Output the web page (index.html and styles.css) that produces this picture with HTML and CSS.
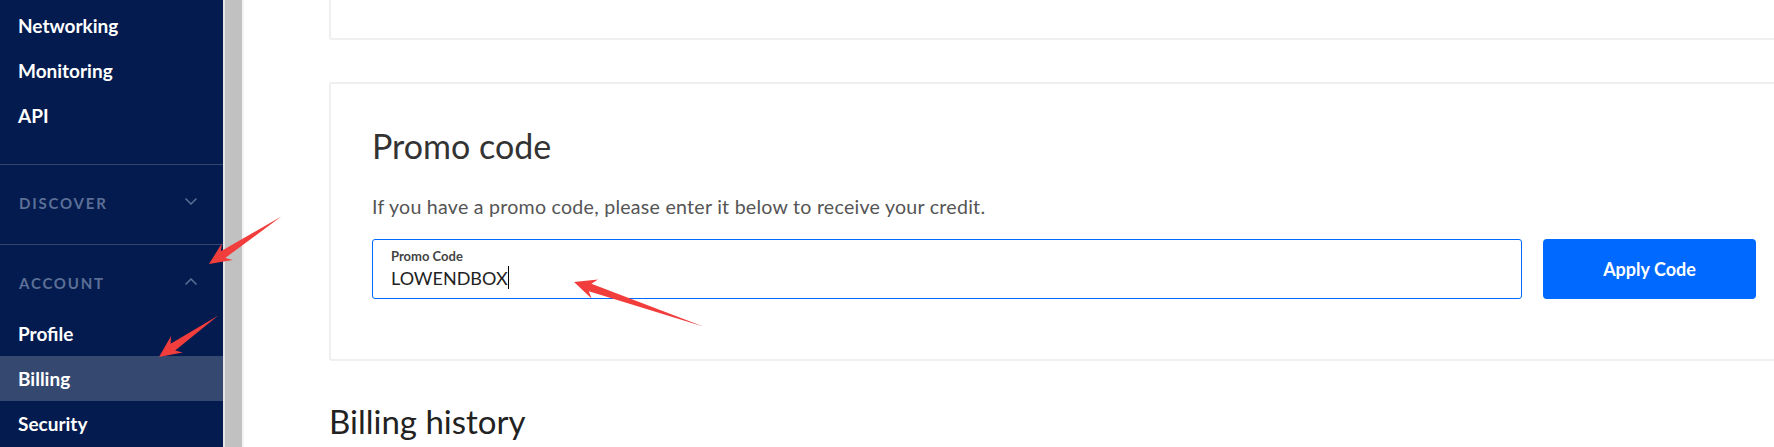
FILE: index.html
```html
<!DOCTYPE html>
<html lang="en">
<head>
    <meta charset="UTF-8">
    <meta name="viewport" content="width=device-width, initial-scale=1.0">
    <title>Billing</title>
    <link rel="stylesheet" href="styles.css">
</head>
<body>
    <!-- Sidebar -->
    <nav class="sidebar">
        <ul class="nav-list top-list">
            <li>Networking</li>
            <li>Monitoring</li>
            <li>API</li>
        </ul>

        <div class="nav-section">
            <div class="nav-head">
                <span>Discover</span>
                <svg class="chevron" width="12" height="7" viewBox="0 0 12 7"><path d="M0.5 0.5 L6 6 L11.5 0.5" /></svg>
            </div>
        </div>

        <div class="nav-section">
            <div class="nav-head">
                <span>Account</span>
                <svg class="chevron" width="12" height="7" viewBox="0 0 12 7"><path d="M0.5 6.5 L6 1 L11.5 6.5" /></svg>
            </div>
            <ul class="nav-list sub-list">
                <li>Profile</li>
                <li class="active">Billing</li>
                <li>Security</li>
            </ul>
        </div>
    </nav>

    <div class="scroll-track"></div>

    <!-- Main content -->
    <main class="content">
        <div class="card card-top"></div>

        <div class="card promo-card">
            <h2>Promo code</h2>
            <p class="promo-text">If you have a promo code, please enter it below to receive your credit.</p>
            <div class="promo-form">
                <div class="field">
                    <label>Promo Code</label>
                    <div class="field-value">LOWENDBOX<span class="caret"></span></div>
                </div>
                <button class="apply-btn">Apply Code</button>
            </div>
        </div>

        <h2 class="section-title">Billing history</h2>
    </main>

    <!-- Annotation arrows -->
    <svg class="annotations" width="1774" height="447" viewBox="0 0 1774 447">
        <polygon points="281.3,216.4 220.9,251.3 221.8,243.5 209,264 232.8,260.1 225.3,257.9" />
        <polygon points="218.3,315.4 170.6,343.8 171.1,336.1 159,357 182.7,352.4 175.2,350.4" />
        <polygon points="703.3,326.5 588.8,291.3 591.6,298.6 574,282 598,279.6 591.4,283.7" />
    </svg>
</body>
</html>
```

FILE: styles.css
```css
body {
    margin: 0;
    height: 447px;
    display: flex;
    overflow: hidden;
    background-color: #fff;
    font-family: Lato, "Liberation Sans", sans-serif;
    position: relative;
}
.sidebar {
    width: 223px;
    flex-shrink: 0;
    background-color: #031b4e;
    color: #fff;
    padding-top: 3px;
    box-sizing: border-box;
}
.nav-list {
    list-style: none;
    margin: 0;
    padding: 0;
}
.nav-list li {
    height: 45px;
    line-height: 45px;
    padding-left: 18px;
    font-size: 19px;
    font-weight: 700;
}
.nav-list li.active {
    background-color: #354870;
}
.top-list {
    padding-bottom: 26px;
}
.nav-section {
    border-top: 1px solid #34466f;
    padding: 26px 0 29px;
}
.nav-section:last-child {
    padding-bottom: 0;
}
.nav-head {
    display: flex;
    align-items: center;
    justify-content: space-between;
    height: 24px;
    padding: 0 26px 0 19px;
    font-size: 15px;
    font-weight: 700;
    letter-spacing: 1.8px;
    text-transform: uppercase;
    color: #5c6f96;
}
.chevron {
    fill: none;
    stroke: #5c6f96;
    stroke-width: 1.5;
    margin-top: -3px;
}
.sub-list {
    margin-top: 16px;
}
.scroll-track {
    width: 17px;
    flex-shrink: 0;
    background-color: #c1c1c1;
    border-left: 2px solid #e4e4e4;
    border-right: 2px solid #f3f3f3;
}
.content {
    flex: 1;
    padding-left: 85px;
    overflow: hidden;
}
.card {
    width: 1470px;
    box-sizing: border-box;
    border: 2px solid #efefef;
    border-radius: 3px;
    background-color: #fff;
}
.card-top {
    height: 40px;
    border-top: none;
    border-radius: 0 0 3px 3px;
}
.promo-card {
    margin-top: 42px;
    height: 279px;
    padding: 42px 41px 0;
}
.promo-card h2 {
    margin: 0;
    font-size: 34px;
    line-height: 40px;
    font-weight: 400;
    color: #333;
}
.promo-text {
    margin: 29px 0 0;
    font-size: 19.6px;
    line-height: 24px;
    letter-spacing: 0.25px;
    color: #555;
}
.promo-form {
    display: flex;
    gap: 21px;
    margin-top: 20px;
}
.field {
    flex: 1;
    height: 60px;
    box-sizing: border-box;
    border: 1px solid #0069ff;
    border-radius: 3px;
    padding: 8px 18px 0;
}
.field label {
    display: block;
    font-size: 13px;
    line-height: 16px;
    font-weight: 700;
    color: #444;
}
.field-value {
    margin-top: 2px;
    font-size: 18px;
    line-height: 22px;
    color: #222;
}
.caret {
    display: inline-block;
    width: 1px;
    height: 23px;
    background-color: #000;
    vertical-align: -4px;
}
.apply-btn {
    width: 213px;
    height: 60px;
    border: none;
    border-radius: 4px;
    background-color: #0069ff;
    color: #fff;
    font-family: Lato, "Liberation Sans", sans-serif;
    font-size: 18px;
    font-weight: 700;
}
.section-title {
    margin: 40px 0 0;
    font-size: 33px;
    line-height: 40px;
    font-weight: 400;
    color: #222;
}
.annotations {
    position: absolute;
    top: 0;
    left: 0;
    pointer-events: none;
    fill: #f23d3d;
}
```
